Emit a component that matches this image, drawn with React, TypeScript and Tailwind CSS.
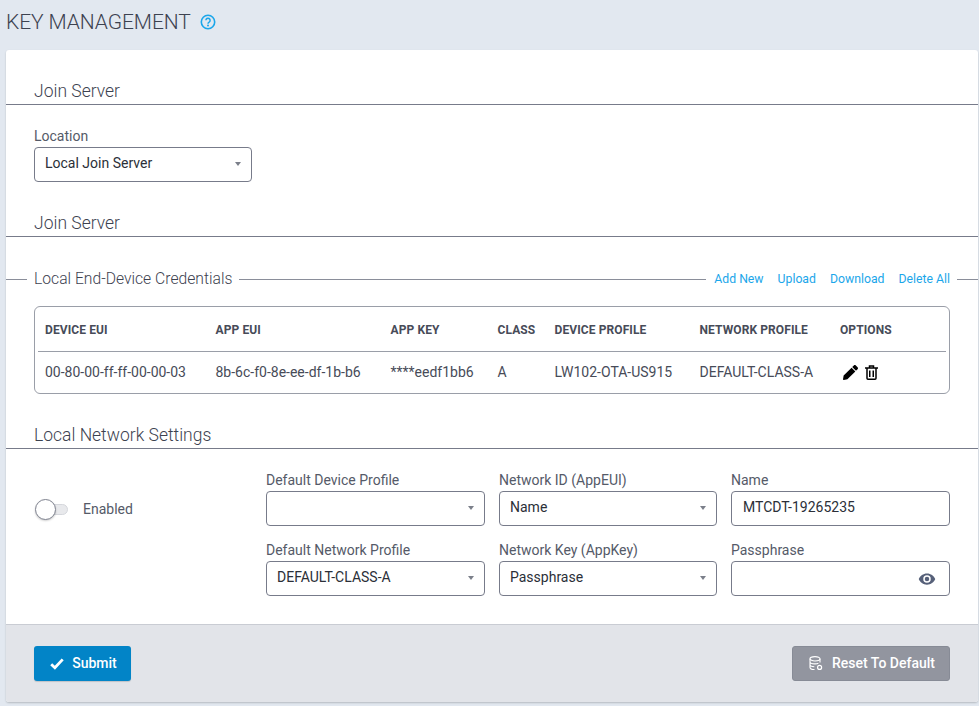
import React from "react";

const Caret = () => (
  <span className="ml-auto w-0 h-0 border-l-[3px] border-r-[3px] border-t-[4px] border-l-transparent border-r-transparent border-t-[#7b7f8a]" />
);

const Select = ({ value }: { value?: string }) => (
  <div className="flex h-[35px] items-center rounded-[4px] border border-[#777b8a] bg-white pb-[2px] pl-[10px] pr-[10px] text-[14px] text-[#2b2f38]">
    <span>{value}</span>
    <Caret />
  </div>
);

const Field = ({ label, children }: { label: string; children: React.ReactNode }) => (
  <div className="flex flex-col">
    <label className="mb-[1px] h-[19px] text-[14px] leading-[19px] text-[#555a68]">{label}</label>
    {children}
  </div>
);

const SectionHead = ({ title, className = "" }: { title: string; className?: string }) => (
  <div className={`h-[27px] border-b border-[#777b8a] pl-[28px] text-[17.5px] font-light leading-[26px] text-[#3d4250] ${className}`}>
    {title}
  </div>
);

const th = "text-left text-[12px] font-bold tracking-[0.1px] text-[#474b58]";
const cols = [
  ["DEVICE EUI", "00-80-00-ff-ff-00-00-03", "w-[170.5px]"],
  ["APP EUI", "8b-6c-f0-8e-ee-df-1b-b6", "w-[175px]"],
  ["APP KEY", "****eedf1bb6", "w-[107px]"],
  ["CLASS", "A", "w-[57px]"],
  ["DEVICE PROFILE", "LW102-OTA-US915", "w-[145px]"],
  ["NETWORK PROFILE", "DEFAULT-CLASS-A", "w-[140.5px]"],
];

export default function App() {
  return (
    <div className="h-[706px] w-[979px] overflow-hidden bg-[#e2e8f0] font-['Roboto',sans-serif]">
      <div className="flex h-[50px] items-start pl-[6px] pt-[8px]">
        <h1 className="text-[21px] font-light leading-[28px] tracking-[-0.1px] text-[#3d4250]">KEY MANAGEMENT</h1>
        <svg className="ml-[9px] mt-[6px] text-[#1ba6ea]" width="16" height="16" viewBox="0 0 16 16" fill="none" stroke="currentColor">
          <circle cx="8" cy="8" r="6.7" strokeWidth="1.6" />
          <path d="M5.9 6.3a2.1 2.1 0 1 1 3.2 1.8c-.7.4-1.1.8-1.1 1.6" strokeWidth="1.5" />
          <circle cx="8" cy="11.6" r="1" fill="currentColor" stroke="none" />
        </svg>
      </div>
      <div className="ml-[6px] h-[652px] w-[972px] overflow-hidden rounded-[3px] bg-white shadow-[0_1px_2px_rgba(0,0,0,0.2)]">
        <SectionHead title="Join Server" className="mt-[28px]" />
        <div className="ml-[28px] mt-[22px] w-[218px]">
          <Field label="Location">
            <Select value="Local Join Server" />
          </Field>
        </div>
        <SectionHead title="Join Server" className="mt-[28px]" />
        <div className="mt-[31px] flex h-[22px] items-center text-[12.25px] text-[#1ba6ea]">
          <span className="h-px w-[21px] bg-[#8a8e9a]" />
          <span className="mx-[7px] text-[15.7px] font-light text-[#3d4250]">Local End-Device Credentials</span>
          <span className="h-px flex-1 bg-[#8a8e9a]" />
          <span className="ml-[8px] pt-[1px]">Add New</span>
          <span className="ml-[14px] pt-[1px]">Upload</span>
          <span className="ml-[14px] pt-[1px]">Download</span>
          <span className="ml-[14px] pt-[1px]">Delete All</span>
          <span className="ml-[7px] h-px w-[21px] bg-[#8a8e9a]" />
        </div>
        <div className="ml-[28px] mt-[16px] h-[88px] w-[916px] rounded-[6px] border border-[#9a9ea8] px-[3px]">
          <div className="flex h-[45px] items-center border-b border-[#9a9ea8] pl-[7px] pt-[2px]">
            {cols.map(([h, , w]) => (
              <div key={h} className={`${w} ${th}`}>{h}</div>
            ))}
            <div className={th}>OPTIONS</div>
          </div>
          <div className="flex h-[41px] items-center pl-[7px] text-[14px] text-[#474b58]">
            {cols.map(([h, v, w]) => (
              <div key={h} className={w}>{v}</div>
            ))}
            <div className="flex items-center gap-[7px] pl-[3px]">
              <svg width="15" height="15" viewBox="0 0 512 512" fill="#000">
                <path d="M497.9 142.1l-46.1 46.1c-4.7 4.7-12.3 4.7-17 0l-111-111c-4.7-4.7-4.7-12.3 0-17l46.1-46.1c18.7-18.7 49.1-18.7 67.9 0l60.1 60.1c18.8 18.7 18.8 49.1 0 67.9zM284.2 99.8L21.6 362.4.4 483.9c-2.9 16.4 11.4 30.6 27.8 27.8l121.5-21.3 262.6-262.6c4.7-4.7 4.7-12.3 0-17l-111-111c-4.8-4.7-12.4-4.7-17.1 0z" />
              </svg>
              <svg width="13" height="15" viewBox="0 0 13 15" fill="none" stroke="#000" strokeWidth="1.5">
                <path d="M0 3h13M4.5 3V1h4v2M2 3v10.2c0 .6.4 1 1 1h7c.6 0 1-.4 1-1V3M4.75 5.5v6.5M8.25 5.5v6.5" />
              </svg>
            </div>
          </div>
        </div>
        <SectionHead title="Local Network Settings" className="mt-[28px]" />
        <div className="mt-[22px] flex pl-[28px]">
          <div className="flex h-[55px] w-[232px] items-end self-start pb-[7px]">
            <div className="relative mb-[4px] h-[11px] w-[35px]">
              <span className="absolute left-[10px] top-0 h-[11px] w-[24px] rounded-full border border-[#d5d7dc] bg-[#e8e9ec]" />
              <span className="absolute left-[1px] top-[-5px] h-[21px] w-[21px] rounded-full border border-[#7f8390] bg-white shadow-[0_1px_2px_rgba(0,0,0,0.2)]" />
            </div>
            <span className="ml-[14px] text-[14px] leading-[19px] text-[#555a68]">Enabled</span>
          </div>
          <div className="grid w-[684px] grid-cols-[219px_218px_219px] gap-x-[14px] gap-y-[15px]">
            <Field label="Default Device Profile"><Select /></Field>
            <Field label="Network ID (AppEUI)"><Select value="Name" /></Field>
            <Field label="Name">
              <div className="flex h-[35px] items-center rounded-[4px] border border-[#777b8a] pb-[2px] pl-[11px] text-[14px] text-[#2b2f38]">MTCDT-19265235</div>
            </Field>
            <Field label="Default Network Profile"><Select value="DEFAULT-CLASS-A" /></Field>
            <Field label="Network Key (AppKey)"><Select value="Passphrase" /></Field>
            <Field label="Passphrase">
              <div className="flex h-[35px] items-center justify-end rounded-[4px] border border-[#777b8a] pr-[13px]">
                <svg width="18" height="18" viewBox="0 0 24 24" fill="#566079">
                  <path d="M12 4.5C7 4.5 2.7 7.6 1 12c1.7 4.4 6 7.5 11 7.5s9.3-3.1 11-7.5c-1.7-4.4-6-7.5-11-7.5zM12 17a5 5 0 1 1 0-10 5 5 0 0 1 0 10zm0-8a3 3 0 1 0 0 6 3 3 0 0 0 0-6z" />
                </svg>
              </div>
            </Field>
          </div>
        </div>
        <div className="mt-[28px] flex h-[78px] items-center justify-between border-t border-[#c9ccd3] bg-[#e2e4e9] px-[28px]">
          <button className="flex h-[35px] w-[97px] items-center justify-center gap-[8px] rounded-[3px] bg-[#0284c7] pl-[2px] text-[14px] font-medium text-white shadow-[0_1px_1px_rgba(0,0,0,0.15)]">
            <svg width="14" height="12" viewBox="0 0 14 12" fill="none" stroke="#fff" strokeWidth="2.8">
              <path d="M1.2 6.2l3.7 3.6 7.8-8.4" />
            </svg>
            Submit
          </button>
          <button className="flex h-[35px] w-[158px] items-center justify-center gap-[9px] rounded-[3px] border border-[#878b96] bg-[#92959f] pl-[2px] text-[14px] font-medium text-white">
            <svg width="14" height="15" viewBox="0 0 14 15" fill="none" stroke="#fff" strokeWidth="1.1">
              <ellipse cx="6" cy="2.8" rx="5" ry="2.2" />
              <path d="M1 2.8v8.6c0 1.1 1.9 2 4.5 2.1M11 2.8v3.6M1 5.7c0 1.2 2.2 2.2 5 2.2 1.3 0 2.6-.2 3.4-.6M1 8.6c0 1.2 1.9 2.1 4.3 2.2" />
              <circle cx="10.6" cy="11.4" r="2" strokeWidth="1.2" />
            </svg>
            Reset To Default
          </button>
        </div>
      </div>
    </div>
  );
}
